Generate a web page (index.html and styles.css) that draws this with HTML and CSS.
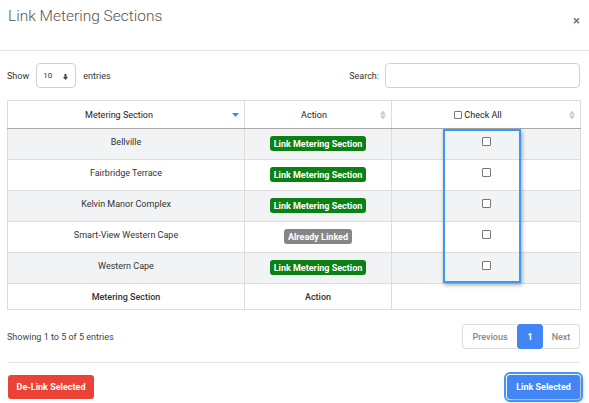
FILE: index.html
```html
<!DOCTYPE html>
<html>
<head>
<meta charset="utf-8">
<link rel="stylesheet" href="styles.css">
</head>
<body>
<div class="modal">
  <div class="modal-header">
    <h1 class="title">Link Metering Sections</h1>
    <span class="close">&times;</span>
  </div>
  <div class="modal-body">
    <div class="controls">
      <label class="length">Show
        <span class="select">10 <svg class="sel-arrow" width="5" height="6" viewBox="0 0 5 6"><rect x="1.5" y="0" width="2" height="3" fill="#444"/><path d="M0 3 H5 L2.5 6 Z" fill="#444"/></svg></span>
        entries</label>
      <label class="search">Search: <span class="search-input"></span></label>
    </div>
    <div class="table-wrap">
      <table class="dt">
        <thead>
          <tr>
            <th class="c1">Metering Section <svg class="sort" width="7" height="4" viewBox="0 0 7 4"><path d="M0 0 H7 L3.5 4 Z" fill="#4a86e8"/></svg></th>
            <th class="c2">Action <svg class="sort" width="6" height="9" viewBox="0 0 6 9"><path d="M0 4 H6 L3 0 Z M0 5 H6 L3 9 Z" fill="#ccc"/></svg></th>
            <th class="c3"><span class="cb cb-head"></span>Check All <svg class="sort" width="6" height="9" viewBox="0 0 6 9"><path d="M0 4 H6 L3 0 Z M0 5 H6 L3 9 Z" fill="#ccc"/></svg></th>
          </tr>
        </thead>
        <tbody>
          <tr class="odd"><td>Bellville</td><td><span class="badge green">Link Metering Section</span></td><td><span class="cb"></span></td></tr>
          <tr><td>Fairbridge Terrace</td><td><span class="badge green">Link Metering Section</span></td><td><span class="cb"></span></td></tr>
          <tr class="odd"><td>Kelvin Manor Complex</td><td><span class="badge green">Link Metering Section</span></td><td><span class="cb"></span></td></tr>
          <tr><td>Smart-View Western Cape</td><td><span class="badge gray">Already Linked</span></td><td><span class="cb"></span></td></tr>
          <tr class="odd"><td>Western Cape</td><td><span class="badge green">Link Metering Section</span></td><td><span class="cb"></span></td></tr>
        </tbody>
        <tfoot>
          <tr><th>Metering Section</th><th>Action</th><th></th></tr>
        </tfoot>
      </table>
      <div class="highlight"></div>
    </div>
    <div class="info-row">
      <div class="info">Showing 1 to 5 of 5 entries</div>
      <div class="pager">
        <span class="pg prev">Previous</span><span class="pg active">1</span><span class="pg next">Next</span>
      </div>
    </div>
  </div>
  <div class="modal-footer">
    <button class="btn red">De-Link Selected</button>
    <button class="btn blue">Link Selected</button>
  </div>
</div>
</body>
</html>
```
FILE: styles.css
```css
* { box-sizing: border-box; }
body {
  margin: 0;
  background: #fff;
  font-family: Roboto, "Liberation Sans", sans-serif;
  color: #333;
  font-size: 9px;
}
.modal { width: 589px; height: 403px; }
.modal-header {
  height: 51px;
  border-bottom: 1px solid #e3e3e3;
  display: flex;
  justify-content: space-between;
  align-items: flex-start;
  padding: 0 8px;
}
.title {
  margin: 7px 0 0 0;
  font-size: 15.5px;
  font-weight: 300;
  color: #555;
}
.close {
  margin-top: 13px;
  margin-right: 1px;
  font-size: 13px;
  color: #777;
  font-weight: 700;
}
.modal-body { padding: 12px 9px 0 7px; }
.controls {
  display: flex;
  justify-content: space-between;
  align-items: center;
  height: 25px;
}
.length, .search { display: flex; align-items: center; font-size: 9px; color: #333; }
.select {
  width: 40px; height: 25px;
  margin: 0 7px 0 7px;
  border: 1px solid #d2d2d2;
  border-radius: 4px;
  display: flex; align-items: center;
  padding-left: 6px;
  font-size: 8px;
}
.sel-arrow { margin-left: 11px; margin-top: 2px; }
.search-input {
  width: 195px; height: 25px;
  margin-left: 6px;
  border: 1px solid #d2d2d2;
  border-radius: 4px;
}
.table-wrap { position: relative; margin-top: 12px; }
.dt {
  width: 573px;
  border-collapse: collapse;
  border: 1px solid #ddd;
  table-layout: fixed;
  font-size: 9px;
  color: #333;
}
.dt th, .dt td { border-left: 1px solid #ddd; border-right: 1px solid #ddd; text-align: center; }
.dt .c1 { width: 237px; padding-right: 15px; }
.dt .c2 { width: 147px; padding-right: 9px; }
.dt .c3 { width: 189px; padding-right: 17px; }
.dt thead th {
  height: 28px;
  font-weight: 400;
  color: #222;
  position: relative;
  border-bottom: 1px solid #a9a9a9;
}
.sort { position: absolute; right: 5px; top: 50%; transform: translateY(-50%); }
.dt tbody td {
  height: 31px;
  vertical-align: top;
  padding-top: 8px;
  border-top: 1px solid #ddd;
}
.dt tbody tr.odd td { background: #f2f3f5; }
.dt tfoot th {
  height: 26px;
  font-weight: 500;
  border-top: 1px solid #ddd;
}
.cb {
  display: inline-block;
  width: 9px; height: 9px;
  border: 1px solid #777;
  border-radius: 1px;
  background: #fff;
  vertical-align: top;
}
.cb-head { vertical-align: -1px; margin-right: 2px; width: 8px; height: 8px; }
.badge {
  display: inline-block;
  color: #fff;
  font-weight: 700;
  font-size: 9px;
  padding: 3px 4px 2px;
  border-radius: 3px;
  line-height: 10px;
  margin-top: -1px;
}
.badge.green { background: #0b8013; }
.badge.gray { background: #868686; }
.highlight {
  position: absolute;
  left: 436px; top: 29px;
  width: 78px; height: 154px;
  border: 2px solid #3f97f5;
  box-shadow: 1px 2px 4px rgba(0,0,0,0.35);
}
.info-row {
  display: flex;
  justify-content: space-between;
  align-items: center;
  margin-top: 14px;
  height: 25px;
}
.info { font-size: 9px; color: #444; }
.pager { display: flex; }
.pg {
  height: 25px;
  display: flex; align-items: center; justify-content: center;
  border: 1px solid #ddd;
  font-size: 9px; color: #888; font-weight: 500;
}
.pg.prev { width: 55px; border-radius: 4px 0 0 4px; border-right: none; }
.pg.active { width: 26px; background: #4285f4; border-color: #4285f4; color: #fff; font-weight: 700; border-radius: 3px; }
.pg.next { width: 37px; border-radius: 0 4px 4px 0; border-left: none; }
.modal-footer {
  margin: 13px 9px 0 7px;
  border-top: 1px solid #e5e5e5;
  display: flex;
  justify-content: space-between;
  align-items: flex-start;
  padding-top: 12px;
}
.btn {
  font-family: Roboto, "Liberation Sans", sans-serif;
  border: none;
  color: #fff;
  font-weight: 700;
  font-size: 9px;
  height: 24px;
  border-radius: 3px;
  padding: 0;
}
.btn.red { background: #ea4335; width: 86px; margin-left: 1px; }
.btn.blue {
  background: #4285f4; width: 73px;
  outline: 2px solid #3f97f5;
  outline-offset: 1px;
  box-shadow: 2px 2px 4px rgba(0,0,0,0.35);
}
```
